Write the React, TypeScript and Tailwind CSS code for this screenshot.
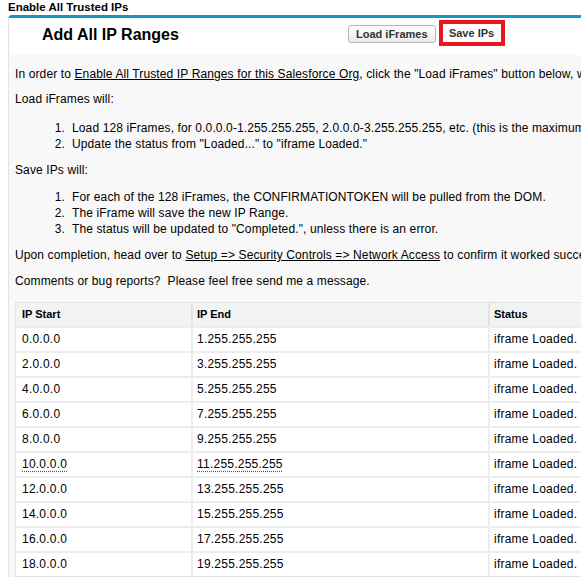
import React from "react";

const rows = Array.from({ length: 10 }, (_, i) => ({
  start: `${i * 2}.0.0.0`,
  end: `${i * 2 + 1}.255.255.255`,
}));

const dotted = "underline decoration-dotted decoration-[#555] underline-offset-[3px]";

export default function App() {
  return (
    <div
      className="w-[581px] h-[577px] overflow-hidden bg-white text-black"
      style={{ fontFamily: '"Liberation Sans", Arial, sans-serif' }}
    >
      <div className="w-[760px]">
        <div className="pl-[8px] h-[15px] text-[11.5px] leading-[15px] font-bold text-black">
          Enable All Trusted IPs
        </div>
        <div className="ml-[8px] border-t-[3px] border-t-[#1797c0] border-l border-l-[#e3e3e3] rounded-tl-[4px] bg-[#f8f8f8]">
          <div className="h-[37px] bg-white flex items-start">
            <div className="ml-[33px] mt-[7px] w-[306px] text-[16px] leading-[20px] font-bold text-black">
              Add All IP Ranges
            </div>
            <button className="mt-[7px] h-[18px] px-[7px] border border-[#b5b5b5] rounded-[3px] bg-gradient-to-b from-white to-[#ececec] text-[11px] leading-[16px] font-bold text-[#333]">
              Load iFrames
            </button>
            <div className="ml-[3px] mt-[2px] flex border-4 border-[#e8161f] bg-white">
              <button className="block h-[18px] w-[58px] text-[11px] leading-[18px] font-bold text-[#333] bg-white">
                Save IPs
              </button>
            </div>
          </div>
          <div className="pl-[6px] pb-[20px] text-[12px] leading-[15px] tracking-[0.12px] text-black whitespace-nowrap">
            <p className="mt-[12px]">
              In order to{" "}
              <span className="underline">
                Enable All Trusted IP Ranges for this Salesforce Org
              </span>
              , click the "Load iFrames" button below, wait for the iframes to load, then click "Save IPs".
            </p>
            <p className="mt-[10px]">Load iFrames will:</p>
            <div className="mt-[13px]">
              <div className="flex h-[16px] leading-[16px]">
                <span className="w-[50px] text-right">1.</span>
                <span className="pl-[7px]">
                  Load 128 iFrames, for 0.0.0.0-1.255.255.255, 2.0.0.0-3.255.255.255, etc. (this is the maximum number of ranges)
                </span>
              </div>
              <div className="flex h-[16px] leading-[16px]">
                <span className="w-[50px] text-right">2.</span>
                <span className="pl-[7px]">
                  Update the status from "Loaded..." to "iframe Loaded."
                </span>
              </div>
            </div>
            <p className="mt-[11px]">Save IPs will:</p>
            <div className="mt-[11px]">
              <div className="flex h-[16px] leading-[16px]">
                <span className="w-[50px] text-right">1.</span>
                <span className="pl-[7px]">
                  For each of the 128 iFrames, the CONFIRMATIONTOKEN will be pulled from the DOM.
                </span>
              </div>
              <div className="flex h-[16px] leading-[16px]">
                <span className="w-[50px] text-right">2.</span>
                <span className="pl-[7px]">The iFrame will save the new IP Range.</span>
              </div>
              <div className="flex h-[16px] leading-[16px]">
                <span className="w-[50px] text-right">3.</span>
                <span className="pl-[7px]">
                  The status will be updated to "Completed.", unless there is an error.
                </span>
              </div>
            </div>
            <p className="mt-[11px]">
              Upon completion, head over to{" "}
              <span className="underline">
                Setup =&gt; Security Controls =&gt; Network Access
              </span>{" "}
              to confirm it worked successfully.
            </p>
            <p className="mt-[11px] whitespace-pre">
              Comments or bug reports?  Please feel free send me a message.
            </p>
            <div className="mt-[13px] border border-[#e0e3e5] bg-white tracking-normal">
              <div className="flex h-[23px] bg-[#f2f3f3] text-[11px] font-bold leading-[23px] text-black">
                <div className="w-[175px] pl-[6px]">IP Start</div>
                <div className="w-[297px] pl-[4px] border-l-2 border-[#e3e3e3]">IP End</div>
                <div className="flex-1 pl-[4px] border-l-2 border-[#e3e3e3]">Status</div>
              </div>
              {rows.map((r, i) => (
                <div
                  key={r.start}
                  className="flex h-[25px] border-t-2 border-[#ededed] text-[12px] leading-[23px] tracking-[0.23px] text-black"
                >
                  <div className="w-[175px] pl-[6px]">
                    <span className={i === 5 ? dotted : ""}>{r.start}</span>
                  </div>
                  <div className="w-[297px] pl-[4px] border-l-2 border-[#ededed]">
                    <span className={i === 5 ? dotted : ""}>{r.end}</span>
                  </div>
                  <div className="flex-1 pl-[4px] border-l-2 border-[#ededed]">iframe Loaded.</div>
                </div>
              ))}
            </div>
          </div>
        </div>
      </div>
    </div>
  );
}
